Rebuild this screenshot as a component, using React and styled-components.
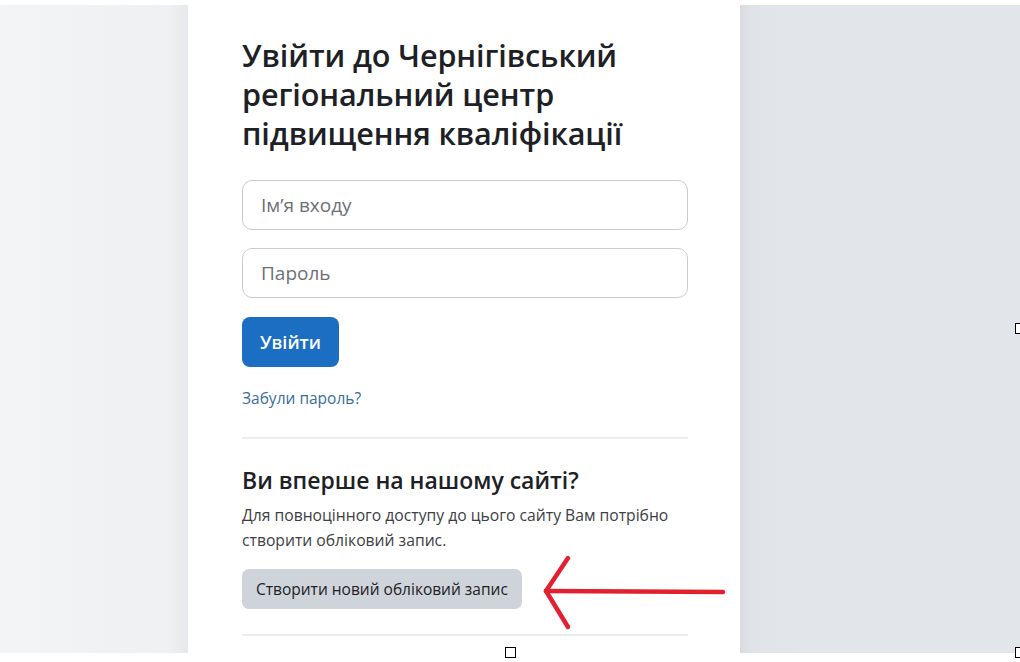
import React from 'react';
import styled, { createGlobalStyle } from 'styled-components';

const GlobalStyle = createGlobalStyle`
  html, body {
    margin: 0;
    background: #ffffff;
    font-family: "Open Sans", "Noto Sans", sans-serif;
  }
`;

const Page = styled.div`
  position: relative;
  width: 1020px;
  height: 662px;
  padding-top: 5px;
  box-sizing: border-box;
  overflow: hidden;
`;

const Shot = styled.div`
  display: grid;
  grid-template-columns: 188px 552px 1fr;
  height: 648px;
`;

const LeftPane = styled.div`
  background: linear-gradient(90deg, #f3f4f6 0%, #eff0f2 90%, #e6e8eb 100%);
`;

const RightPane = styled.div`
  background: linear-gradient(90deg, #d8dbdf 0px, #e0e3e7 12px, #e2e5e9 60px);
`;

const Card = styled.div`
  background: #ffffff;
  padding: 31px 52px 0 54px;
  color: #1d2125;
`;

const Title = styled.h1`
  margin: 0 0 27px;
  font-size: 30.6px;
  line-height: 39px;
  font-weight: 600;
  letter-spacing: -0.1px;
`;

const Field = styled.div`
  height: 50px;
  box-sizing: border-box;
  border: 1.5px solid #c9cbce;
  border-radius: 10px;
  display: flex;
  align-items: center;
  padding: 0 18px;
  margin-bottom: ${(p) => p.$gap || 0}px;
  font-size: 19px;
  color: #6c7075;
`;

const PrimaryButton = styled.button`
  height: 50px;
  padding: 0 18px;
  border: none;
  border-radius: 8px;
  background: #1b6ec2;
  color: #ffffff;
  font-family: inherit;
  font-size: 18px;
  font-weight: 600;
`;

const ForgotLink = styled.a`
  display: block;
  margin-top: 20px;
  font-size: 15.5px;
  color: #3a6d9c;
  text-decoration: none;
`;

const Divider = styled.hr`
  border: none;
  border-top: 2px solid #eceded;
  margin: ${(p) => p.$top || 0}px 0 0;
`;

const SubTitle = styled.h2`
  margin: 26px 0 8px;
  font-size: 23px;
  line-height: 30px;
  font-weight: 600;
`;

const Note = styled.p`
  margin: 0 0 16px;
  font-size: 15.7px;
  line-height: 25px;
  color: #3c4044;
`;

const SecondaryButton = styled.button`
  height: 40px;
  padding: 0 14px;
  border: none;
  border-radius: 7px;
  background: #ced4da;
  color: #1d2125;
  font-family: inherit;
  font-size: 15.5px;
`;

const Handle = styled.span`
  position: absolute;
  width: 9px;
  height: 9px;
  border: 1px solid #000;
  background: #fff;
  left: ${(p) => p.$x}px;
  top: ${(p) => p.$y}px;
`;

const ArrowSvg = styled.svg`
  position: absolute;
  left: 538px;
  top: 552px;
`;

const Arrow = () => (
  <ArrowSvg width="192" height="82" viewBox="0 0 192 82">
    <g stroke="#e3202f" strokeWidth="4.5" strokeLinecap="round" fill="none">
      <line x1="8" y1="39" x2="185" y2="40" />
      <line x1="8" y1="39" x2="30" y2="6" />
      <line x1="8" y1="39" x2="30" y2="75" />
    </g>
  </ArrowSvg>
);

export default function App() {
  return (
    <>
      <GlobalStyle />
      <Page>
        <Shot>
          <LeftPane />
          <Card>
            <Title>
              Увійти до Чернігівський регіональний центр підвищення кваліфікації
            </Title>
            <Field $gap={18}>Ім’я входу</Field>
            <Field $gap={19}>Пароль</Field>
            <PrimaryButton>Увійти</PrimaryButton>
            <ForgotLink href="#">Забули пароль?</ForgotLink>
            <Divider $top={28} />
            <SubTitle>Ви вперше на нашому сайті?</SubTitle>
            <Note>
              Для повноцінного доступу до цього сайту Вам потрібно створити обліковий запис.
            </Note>
            <SecondaryButton>Створити новий обліковий запис</SecondaryButton>
            <Divider $top={25} />
          </Card>
          <RightPane />
        </Shot>
        <Arrow />
        <Handle $x={1015} $y={323} />
        <Handle $x={505} $y={647} />
        <Handle $x={1015} $y={647} />
      </Page>
    </>
  );
}
